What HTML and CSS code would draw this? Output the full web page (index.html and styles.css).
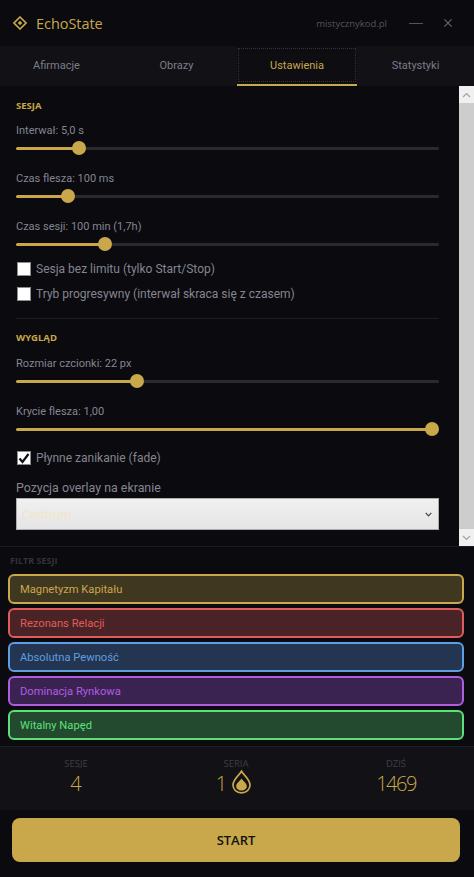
FILE: index.html
```html
<!DOCTYPE html>
<html lang="pl">
<head>
<meta charset="utf-8">
<title>EchoState</title>
<link rel="stylesheet" href="styles.css">
</head>
<body>
<div class="app">
  <header class="titlebar">
    <svg class="logo" width="14" height="14" viewBox="0 0 14 14"><path d="M7 1 13 7 7 13 1 7Z" fill="none" stroke="#c8a84b" stroke-width="1.6"/><path d="M7 4.7 9.3 7 7 9.3 4.7 7Z" fill="#c8a84b"/></svg>
    <span class="brand">EchoState</span>
    <span class="site">mistycznykod.pl</span>
    <svg class="winbtn min" width="14" height="14" viewBox="0 0 14 14"><path d="M0 7.5H14" stroke="#55555c" stroke-width="1"/></svg>
    <svg class="winbtn close" width="8" height="8" viewBox="0 0 8 8"><path d="M.4.4 7.6 7.6M7.6.4.4 7.6" stroke="#66666c" stroke-width="1.1"/></svg>
  </header>
  <nav class="tabs">
    <span class="tab first">Afirmacje</span>
    <span class="tab">Obrazy</span>
    <span class="tab active"><span class="focus">Ustawienia</span></span>
    <span class="tab">Statystyki</span>
  </nav>
  <div class="settings">
    <main class="panel">
      <h2 class="section">SESJA</h2>
      <label class="field"><span>Interwał: 5,0 s</span><input class="slider" type="range" value="13.7" style="--p:13.7"></label>
      <label class="field"><span>Czas flesza: 100 ms</span><input class="slider" type="range" value="11" style="--p:11"></label>
      <label class="field"><span>Czas sesji: 100 min (1,7h)</span><input class="slider" type="range" value="20" style="--p:20"></label>
      <div class="checks">
        <label class="check"><input type="checkbox"><span>Sesja bez limitu (tylko Start/Stop)</span></label>
        <label class="check"><input type="checkbox"><span>Tryb progresywny (interwał skraca się z czasem)</span></label>
      </div>
      <hr class="rule">
      <h2 class="section">WYGLĄD</h2>
      <label class="field"><span>Rozmiar czcionki: 22 px</span><input class="slider" type="range" value="27.9" style="--p:27.9"></label>
      <label class="field"><span>Krycie flesza: 1,00</span><input class="slider" type="range" value="100" style="--p:100"></label>
      <label class="check fade"><input type="checkbox" checked><span>Płynne zanikanie (fade)</span></label>
      <label class="pick"><span>Pozycja overlay na ekranie</span>
        <select><option>Centrum</option></select>
      </label>
    </main>
    <div class="scrollbar">
      <span class="sbtn"><svg width="9" height="6" viewBox="0 0 9 6"><path d="M1 5 4.5 1.5 8 5" fill="none" stroke="#a3a3a3" stroke-width="1.2"/></svg></span>
      <span class="strack"></span>
      <span class="sbtn"><svg width="9" height="6" viewBox="0 0 9 6"><path d="M1 1 4.5 4.5 8 1" fill="none" stroke="#a3a3a3" stroke-width="1.2"/></svg></span>
    </div>
  </div>
  <section class="filters">
    <div class="filter-title">FILTR SESJI</div>
    <button class="chip gold">Magnetyzm Kapitału</button>
    <button class="chip red">Rezonans Relacji</button>
    <button class="chip blue">Absolutna Pewność</button>
    <button class="chip purple">Dominacja Rynkowa</button>
    <button class="chip green">Witalny Napęd</button>
  </section>
  <section class="stats">
    <div class="stat"><div class="stat-label">SESJE</div><div class="stat-value">4</div></div>
    <div class="stat"><div class="stat-label">SERIA</div><div class="stat-value streak">1
      <svg class="flame" width="19" height="24" viewBox="0 0 19 24"><path d="M9.5 1.2C11 4.6 18 8.7 18 15.1 18 19.6 14.4 22.8 9.5 22.8 4.6 22.8 1 19.6 1 15.1 1 8.7 8 4.6 9.5 1.2Z" fill="none" stroke="#c8a84b" stroke-width="1.7"/><path d="M9.5 8.5C11 11 14.8 13.2 14.8 16.2 14.8 18.9 12.5 20.4 9.5 20.4 6.5 20.4 4.2 18.9 4.2 16.2 4.2 13.2 8 11 9.5 8.5Z" fill="#c8a84b"/></svg>
    </div></div>
    <div class="stat"><div class="stat-label">DZIŚ</div><div class="stat-value tight">1469</div></div>
  </section>
  <div class="actions"><button class="start">START</button></div>
</div>
</body>
</html>
```
FILE: styles.css
```css
* { box-sizing: border-box; }
html, body { margin: 0; height: 100%; }
body { background: #0a0a0f; font-family: Roboto, "Open Sans", sans-serif; color: #85858f; overflow: hidden; }
.app { width: 474px; height: 877px; display: flex; flex-direction: column; background: #0a0a0f; }

.titlebar { height: 46px; display: flex; align-items: center; padding: 0 22px 0 13px; flex: none; }
.logo { flex: none; }
.brand { margin-left: 9px; font: 14.5px "Open Sans", sans-serif; color: #c8a84b; flex: 1; letter-spacing: -.05px; }
.site { font: 9.5px "Open Sans", sans-serif; color: #55555c; margin-right: -1px; }
.winbtn { flex: none; }
.min { margin-left: 23px; }
.close { margin-left: 21px; }

.tabs { height: 40px; flex: none; display: grid; grid-template-columns: 116px 121px 120px 1fr; background: #111116; }
.tab { display: flex; align-items: center; justify-content: center; font-size: 11px; color: #7d7d87; padding: 2px 1px 2px; border-bottom: 2px solid transparent; }
.tab.first { padding-right: 4px; }
.tab.active { color: #c8a84b; border-bottom-color: #c8a84b; background: #0d0d12; }
.focus { flex: 1; align-self: stretch; display: flex; align-items: center; justify-content: center; border: 1px dotted #33333a; }

.settings { height: 460px; flex: none; display: flex; }
.panel { flex: 1; min-width: 0; padding: 13px 20px 0 16px; }
.section { margin: 0; font: 700 9.5px/13px "Open Sans", sans-serif; color: #c8a84b; }
.field { display: block; margin-bottom: 14px; font-size: 11px; line-height: 16px; color: #85858f; }
.section + .field { margin-top: 10px; }
.rule + .section + .field { margin-top: 11px; }
.field span { display: block; padding-top: 1px; }
.slider { -webkit-appearance: none; appearance: none; display: block; width: 100%; height: 16px; margin: 1px 0 0; padding: 0; background: transparent; }
.slider::-webkit-slider-runnable-track { height: 3px; border-radius: 2px; background: linear-gradient(to right, #c8a84b calc(7px + (100% - 14px) * var(--p) / 100), #2a2a2e 0); }
.slider::-webkit-slider-thumb { -webkit-appearance: none; width: 14px; height: 14px; margin-top: -5.5px; border-radius: 50%; background: #c8a84b; }

.checks { display: flex; flex-direction: column; gap: 9px; margin-top: -5px; }
.check { display: flex; align-items: center; gap: 5px; font-size: 12px; line-height: 16px; color: #85858f; margin-left: 1px; }
.check input { -webkit-appearance: none; appearance: none; flex: none; width: 14px; height: 14px; margin: 0; background: #fff; border: 1px solid #8c8c8c; }
.check input:checked { background: #fff url("data:image/svg+xml,%3Csvg xmlns='http://www.w3.org/2000/svg' width='12' height='12' viewBox='0 0 12 12'%3E%3Cpath d='M1.5 6.5 4.5 10 10.5 2' fill='none' stroke='%23111' stroke-width='2.2'/%3E%3C/svg%3E") center no-repeat; }
.rule { height: 1px; border: 0; margin: 16px 0 12px; background: #1d1d26; }
.fade { margin-top: -1px; }
.pick { display: block; margin-top: 14px; font-size: 12.4px; line-height: 16px; color: #85858f; }
.pick span { display: block; margin-bottom: 2px; }
.pick select { -webkit-appearance: none; appearance: none; display: block; width: 100%; height: 32px; padding: 0 5px; border: 1px solid #adadad; border-radius: 0; font: 13px Roboto, sans-serif; color: #f0e6c8; background: url("data:image/svg+xml,%3Csvg xmlns='http://www.w3.org/2000/svg' width='7' height='5' viewBox='0 0 7 5'%3E%3Cpath d='M.7.8 3.5 3.8 6.3.8' fill='none' stroke='%23444' stroke-width='1.2'/%3E%3C/svg%3E") right 6px center no-repeat, linear-gradient(#f0f0f0, #e5e5e5); }

.scrollbar { width: 15px; flex: none; display: flex; flex-direction: column; background: #cdcdcd; }
.sbtn { height: 17px; flex: none; display: flex; align-items: center; justify-content: center; background: #f0f0f0; }
.strack { flex: 1; }

.filters { border-top: 1px solid #1a1a20; padding: 8px 10px 6px 8px; flex: none; display: flex; flex-direction: column; gap: 4px; height: 200px; }
.filter-title { font: 700 9px/12px "Open Sans", sans-serif; color: #33333a; padding-left: 2px; margin-bottom: 3px; }
.chip { height: 30px; flex: none; display: block; width: 100%; text-align: left; padding: 0 10px; border: 2px solid; border-radius: 6px; font: 11.2px Roboto, sans-serif; }
.gold { border-color: #c8a84b; background: #403720; color: #c8a84b; }
.red { border-color: #e05c5c; background: #4a2326; color: #e05c5c; }
.blue { border-color: #5c9ee0; background: #233550; color: #5c9ee0; }
.purple { border-color: #b05ce0; background: #3a2350; color: #b05ce0; }
.green { border-color: #5ce07a; background: #234a2f; color: #5ce07a; }

.stats { height: 64px; flex: none; display: grid; grid-template-columns: repeat(3, 128px); column-gap: 32px; padding: 0 14px 0 12px; background: #111116; border-top: 1px solid #1d1d26; }
.stat { text-align: center; padding-top: 11px; }
.stat-label { font: 9.5px/12px "Open Sans", sans-serif; color: #3f3f46; }
.stat-value { font: 300 20px/26px "Open Sans", sans-serif; margin-top: 1px; color: #c8a84b; display: flex; align-items: center; justify-content: center; gap: 5px; }
.streak { padding-right: 5px; }
.tight { letter-spacing: -1.5px; }
.flame { flex: none; margin-top: -5px; }

.actions { flex: 1; padding: 8px 14px 15px 12px; }
.start { display: block; width: 100%; height: 44px; padding-top: 1px; border: 0; border-radius: 8px; background: #c8a84b; color: #111; font: 600 13px "Open Sans", sans-serif; }
```
